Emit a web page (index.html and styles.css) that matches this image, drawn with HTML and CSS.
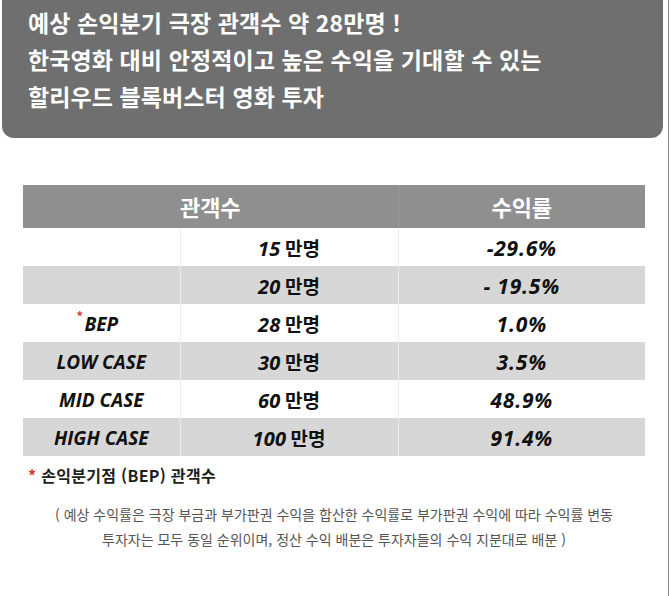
FILE: index.html
```html
<!DOCTYPE html>
<html lang="ko">
<head>
<meta charset="utf-8">
<link rel="stylesheet" href="styles.css">
</head>
<body>
<div class="page">
  <div class="banner">
    <p>예상 손익분기 극장 관객수 약 28만명 !</p>
    <p>한국영화 대비 안정적이고 높은 수익을 기대할 수 있는</p>
    <p>할리우드 블록버스터 영화 투자</p>
  </div>

  <table class="rates">
    <colgroup>
      <col class="c1"><col class="c2"><col class="c3">
    </colgroup>
    <thead>
      <tr><th colspan="2">관객수</th><th>수익률</th></tr>
    </thead>
    <tbody>
      <tr><td></td><td><i class="num">15</i> <span class="ko">만명</span></td><td><i class="rate">-29.6%</i></td></tr>
      <tr class="alt"><td></td><td><i class="num">20</i> <span class="ko">만명</span></td><td><i class="rate">- 19.5%</i></td></tr>
      <tr><td><span class="bep"><span class="star">*</span><i class="label">BEP</i></span></td><td><i class="num">28</i> <span class="ko">만명</span></td><td><i class="rate">1.0%</i></td></tr>
      <tr class="alt"><td><i class="label">LOW CASE</i></td><td><i class="num">30</i> <span class="ko">만명</span></td><td><i class="rate">3.5%</i></td></tr>
      <tr><td><i class="label">MID CASE</i></td><td><i class="num">60</i> <span class="ko">만명</span></td><td><i class="rate">48.9%</i></td></tr>
      <tr class="alt"><td><i class="label">HIGH CASE</i></td><td><i class="num">100</i> <span class="ko">만명</span></td><td><i class="rate">91.4%</i></td></tr>
    </tbody>
  </table>

  <p class="footnote"><span class="red">*</span> 손익분기점 (BEP) 관객수</p>

  <div class="notes">
    <p>( 예상 수익률은 극장 부금과 부가판권 수익을 합산한 수익률로 부가판권 수익에 따라 수익률 변동</p>
    <p>투자자는 모두 동일 순위이며, 정산 수익 배분은 투자자들의 수익 지분대로 배분 )</p>
  </div>
</div>
</body>
</html>
```

FILE: styles.css
```css
html, body {
  margin: 0;
  padding: 0;
  background: #ffffff;
}

body {
  font-family: "Noto Sans CJK KR", "Noto Sans", sans-serif;
  color: #111;
}

.page {
  width: 668px;
  min-height: 596px;
  border-right: 1px solid #8a8a8a;
  overflow: hidden;
}

.banner {
  margin-left: 2px;
  width: 661px;
  box-sizing: border-box;
  background: #6f6f6f;
  border-radius: 0 0 12px 12px;
  padding: 4px 0 23px 26px;
  color: #ffffff;
}

.banner p {
  margin: 0;
  font-size: 23px;
  font-weight: 700;
  line-height: 37px;
  letter-spacing: 0.1px;
}

.rates {
  margin: 47px 0 0 23px;
  width: 622px;
  border-collapse: collapse;
  table-layout: fixed;
}

.rates .c1 { width: 157px; }
.rates .c2 { width: 218px; }
.rates .c3 { width: 247px; }

.rates th {
  height: 41px;
  padding: 0 0 2px 0;
  background: #8f8f8f;
  color: #ffffff;
  font-size: 22px;
  font-weight: 700;
  text-align: center;
  border-left: 1px solid #9c9c9c;
}

.rates th:first-child {
  border-left: none;
}

.rates td {
  height: 38px;
  padding: 2px 0 0 0;
  text-align: center;
  vertical-align: middle;
  border-left: 1px solid #ededed;
  line-height: 22px;
  box-sizing: border-box;
}

.rates td:first-child {
  border-left: none;
}

.rates tr.alt td {
  background: #d7d7d7;
  border-left-color: #ececec;
}

.rates tr.alt td:first-child {
  border-left: none;
}

.rates i {
  font-family: "Open Sans", "Noto Sans", sans-serif;
  font-style: italic;
  font-weight: 700;
}

.rates .label {
  font-size: 19px;
  letter-spacing: 0;
}

.rates .num {
  font-size: 20px;
  letter-spacing: 0.2px;
}

.rates .rate {
  font-size: 21px;
  letter-spacing: 0.8px;
}

.rates .ko {
  font-family: "Noto Sans CJK KR", sans-serif;
  font-weight: 700;
  font-size: 19px;
}

.bep {
  position: relative;
}

.bep .star {
  position: absolute;
  left: -8px;
  top: -7px;
  color: #d93a2b;
  font-size: 13px;
  font-weight: 700;
}

.footnote {
  margin: 8px 0 0 0;
  padding-left: 28px;
  font-size: 16px;
  font-weight: 700;
  line-height: 22px;
  letter-spacing: 0.3px;
  color: #1e1e1e;
}

.footnote .red {
  color: #d93a2b;
}

.notes {
  margin-top: 16px;
  text-align: center;
}

.notes p {
  margin: 0;
  font-size: 14px;
  line-height: 25px;
  color: #555555;
  letter-spacing: 0;
}
```
